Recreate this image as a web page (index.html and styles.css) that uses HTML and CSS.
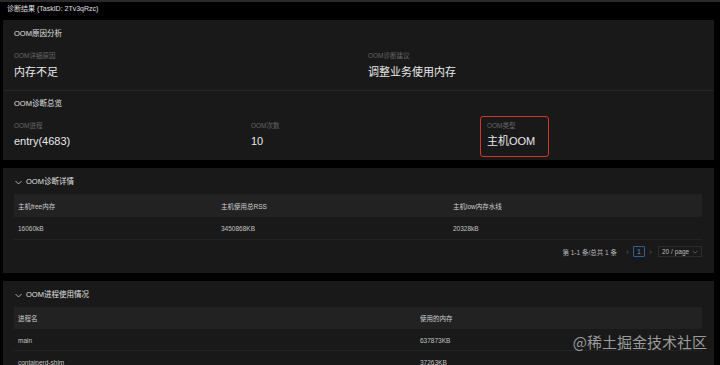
FILE: index.html
```html
<!DOCTYPE html>
<html lang="zh-CN">

<head>
    <meta charset="UTF-8">
    <meta name="viewport" content="width=device-width, initial-scale=1.0">
    <title>诊断结果</title>
    <link rel="stylesheet" href="styles.css">
</head>

<body>
    <div class="topbar">诊断结果 (TaskID: 2Tv3qRzc)</div>

    <div class="page">
        <!-- 原因分析 + 总览 -->
        <div class="card">
            <div class="section">
                <div class="section-title">OOM原因分析</div>
                <div class="reason-grid">
                    <div class="field">
                        <div class="field-label">OOM详细原因</div>
                        <div class="field-value">内存不足</div>
                    </div>
                    <div class="field">
                        <div class="field-label">OOM诊断建议</div>
                        <div class="field-value">调整业务使用内存</div>
                    </div>
                </div>
            </div>
            <div class="section section-overview">
                <div class="section-title">OOM诊断总览</div>
                <div class="overview-grid">
                    <div class="stat">
                        <div class="field-label">OOM进程</div>
                        <div class="field-value">entry(4683)</div>
                    </div>
                    <div class="stat">
                        <div class="field-label">OOM次数</div>
                        <div class="field-value">10</div>
                    </div>
                    <div class="stat highlight">
                        <div class="field-label">OOM类型</div>
                        <div class="field-value">主机OOM</div>
                    </div>
                </div>
            </div>
        </div>

        <!-- 诊断详情 -->
        <div class="card panel">
            <div class="panel-title">
                <svg class="chevron" width="7" height="5" viewBox="0 0 7 5"><path d="M0.5 1 L3.5 4 L6.5 1" fill="none" stroke="#bbb" stroke-width="0.9"/></svg>
                OOM诊断详情
            </div>
            <table class="data-table detail-table">
                <thead>
                    <tr>
                        <th class="col-free">主机free内存</th>
                        <th class="col-rss">主机使用总RSS</th>
                        <th>主机low内存水线</th>
                    </tr>
                </thead>
                <tbody>
                    <tr>
                        <td>16060kB</td>
                        <td>3450868KB</td>
                        <td>20328kB</td>
                    </tr>
                </tbody>
            </table>
            <div class="pager">
                <span class="pager-total">第 1-1 条/总共 1 条</span>
                <span class="pager-arrow">&lsaquo;</span>
                <span class="pager-num">1</span>
                <span class="pager-arrow">&rsaquo;</span>
                <span class="pager-size">20 / page
                    <svg width="6" height="4" viewBox="0 0 6 4"><path d="M0.5 0.8 L3 3.2 L5.5 0.8" fill="none" stroke="#666" stroke-width="0.8"/></svg>
                </span>
            </div>
        </div>

        <!-- 进程使用情况 -->
        <div class="card panel">
            <div class="panel-title">
                <svg class="chevron" width="7" height="5" viewBox="0 0 7 5"><path d="M0.5 1 L3.5 4 L6.5 1" fill="none" stroke="#bbb" stroke-width="0.9"/></svg>
                OOM进程使用情况
            </div>
            <table class="data-table proc-table">
                <thead>
                    <tr>
                        <th class="col-name">进程名</th>
                        <th>使用的内存</th>
                    </tr>
                </thead>
                <tbody>
                    <tr>
                        <td>main</td>
                        <td>637873KB</td>
                    </tr>
                    <tr>
                        <td>containerd-shim</td>
                        <td>37263KB</td>
                    </tr>
                </tbody>
            </table>
        </div>
    </div>

    <div class="watermark">@稀土掘金技术社区</div>
</body>

</html>
```

FILE: styles.css
```css
body {
    margin: 0;
    background-color: #000;
    font-family: "Liberation Sans", "Noto Sans CJK SC", sans-serif;
    color: #ddd;
    overflow: hidden;
    height: 365px;
    position: relative;
}

.topbar {
    border-top: 2px solid #2a2a2a;
    height: 18px;
    line-height: 13px;
    padding-left: 7px;
    font-size: 7px;
    color: #e0e0e0;
}

.page {
    padding: 0 6px 0 3px;
}

.card {
    background-color: #191919;
    margin-bottom: 8px;
}

.section {
    padding: 8px 0 10px 11px;
}

.section-title {
    font-size: 7.5px;
    line-height: 12px;
    color: #e2e2e2;
}

.reason-grid {
    display: grid;
    grid-template-columns: 354px 1fr;
    margin-top: 11px;
}

.field-label {
    font-size: 6.5px;
    line-height: 10px;
    color: #666;
}

.field-value {
    font-size: 11px;
    line-height: 16px;
    color: #e8e8e8;
    margin-top: 3px;
}

.section-overview {
    border-top: 1px solid #262626;
    padding: 7px 0 3px 11px;
}

.overview-grid {
    display: grid;
    grid-template-columns: 237px 236px 1fr;
    margin-top: 6px;
    margin-left: -7px;
}

.stat {
    justify-self: start;
    padding: 4px 13px 7px 6px;
    border: 1px solid transparent;
    border-radius: 3px;
}

.stat .field-value {
    margin-top: 2px;
}

.highlight {
    border-color: #d3342b;
}

.panel {
    padding: 8px 12px 16px 11px;
}

.panel-title {
    display: flex;
    align-items: center;
    gap: 4px;
    font-size: 7.5px;
    line-height: 12px;
    color: #e2e2e2;
    padding-left: 1px;
}

.chevron {
    margin-top: 1px;
}

.data-table {
    width: 100%;
    margin-top: 6px;
    border-collapse: collapse;
    table-layout: fixed;
    font-size: 6.5px;
}

.data-table th {
    background-color: #222;
    color: #d0d0d0;
    font-weight: normal;
    text-align: left;
    height: 23px;
    padding: 0 4px;
}

.data-table td {
    color: #c4c4c4;
    height: 22px;
    padding: 0 4px;
    border-bottom: 1px solid #232323;
}

.col-free {
    width: 195px;
}

.col-rss {
    width: 224px;
}

.col-name {
    width: 394px;
}

.proc-table th {
    height: 22px;
}

.proc-table td {
    height: 20px;
    padding-top: 1px;
}

.pager {
    display: flex;
    justify-content: flex-end;
    align-items: center;
    gap: 4px;
    margin-top: 6px;
    font-size: 6.5px;
    color: #bbb;
    height: 11px;
}

.pager-total {
    margin-right: 5px;
}

.pager-arrow {
    color: #555;
    font-size: 9px;
}

.pager-num {
    border: 1px solid #2f5f95;
    color: #5b9ae0;
    width: 10px;
    height: 9px;
    line-height: 9px;
    text-align: center;
    border-radius: 1px;
}

.pager-size {
    box-sizing: border-box;
    width: 44px;
    display: flex;
    align-items: center;
    justify-content: space-between;
    border: 1px solid #2c2c2c;
    padding: 0 3px;
    height: 11px;
    margin-left: 2px;
    white-space: nowrap;
}

.watermark {
    position: absolute;
    right: 13px;
    top: 332px;
    font-family: "Noto Sans CJK SC", sans-serif;
    font-size: 15px;
    line-height: 20px;
    color: rgba(200, 200, 200, 0.75);
}
```
